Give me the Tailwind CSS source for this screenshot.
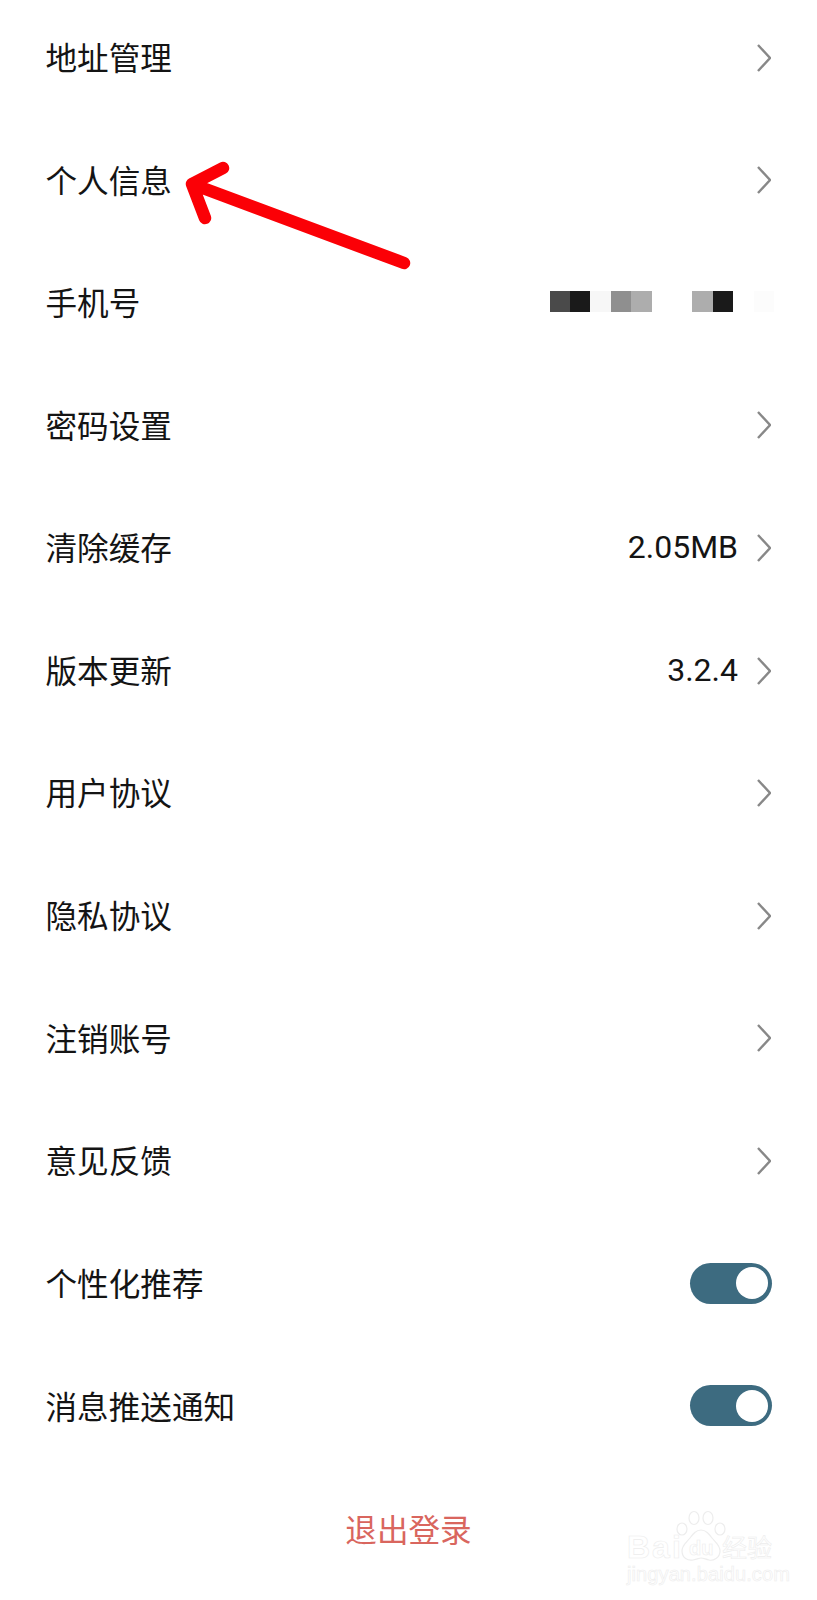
<!doctype html>
<html lang="zh">
<head>
<meta charset="utf-8">
<script src="https://cdn.jsdelivr.net/npm/@tailwindcss/browser@4"></script>
</head>
<body class="bg-white">
<div class="relative w-[817px] h-[1600px] overflow-hidden bg-white text-[#141414] font-['Noto_Sans_CJK_SC','Noto_Sans',sans-serif]">
  <main class="flex flex-col -mt-[4.6px] text-[31.6px] leading-none">
    <div class="h-[122.6px] flex items-center justify-between pl-[45.5px] pr-[46px]"><span>地址管理</span><svg class="w-[14px] h-[28px] mt-[2px]" viewBox="0 0 14 28" fill="none" stroke="#888" stroke-width="2.4"><path d="M1 1l12 13L1 27"/></svg></div>
    <div class="h-[122.6px] flex items-center justify-between pl-[45.5px] pr-[46px]"><span>个人信息</span><svg class="w-[14px] h-[28px] mt-[2px]" viewBox="0 0 14 28" fill="none" stroke="#888" stroke-width="2.4"><path d="M1 1l12 13L1 27"/></svg></div>
    <div class="h-[122.6px] flex items-center justify-between pl-[45.5px] pr-[43px]">
      <span>手机号</span>
      <div class="flex h-[21px]">
        <i class="block w-[20.4px] bg-[#4a4a4a]"></i><i class="block w-[20.4px] bg-[#1a1a1a]"></i><i class="block w-[20.4px] bg-[#f7f7f7]"></i><i class="block w-[20.4px] bg-[#8f8f8f]"></i><i class="block w-[20.4px] bg-[#adadad]"></i><i class="block w-[40.8px]"></i><i class="block w-[20.4px] bg-[#adadad]"></i><i class="block w-[20.4px] bg-[#1a1a1a]"></i><i class="block w-[20.4px]"></i><i class="block w-[20.4px] bg-[#fcfcfc]"></i>
      </div>
    </div>
    <div class="h-[122.6px] flex items-center justify-between pl-[45.5px] pr-[46px]"><span>密码设置</span><svg class="w-[14px] h-[28px] mt-[2px]" viewBox="0 0 14 28" fill="none" stroke="#888" stroke-width="2.4"><path d="M1 1l12 13L1 27"/></svg></div>
    <div class="h-[122.6px] flex items-center justify-between pl-[45.5px] pr-[46px]"><span>清除缓存</span><div class="flex items-center gap-[19px]"><span class="font-['Roboto',sans-serif] text-[32px]">2.05MB</span><svg class="w-[14px] h-[28px] mt-[2px]" viewBox="0 0 14 28" fill="none" stroke="#888" stroke-width="2.4"><path d="M1 1l12 13L1 27"/></svg></div></div>
    <div class="h-[122.6px] flex items-center justify-between pl-[45.5px] pr-[46px]"><span>版本更新</span><div class="flex items-center gap-[19px]"><span class="font-['Roboto',sans-serif] text-[32px]">3.2.4</span><svg class="w-[14px] h-[28px] mt-[2px]" viewBox="0 0 14 28" fill="none" stroke="#888" stroke-width="2.4"><path d="M1 1l12 13L1 27"/></svg></div></div>
    <div class="h-[122.6px] flex items-center justify-between pl-[45.5px] pr-[46px]"><span>用户协议</span><svg class="w-[14px] h-[28px] mt-[2px]" viewBox="0 0 14 28" fill="none" stroke="#888" stroke-width="2.4"><path d="M1 1l12 13L1 27"/></svg></div>
    <div class="h-[122.6px] flex items-center justify-between pl-[45.5px] pr-[46px]"><span>隐私协议</span><svg class="w-[14px] h-[28px] mt-[2px]" viewBox="0 0 14 28" fill="none" stroke="#888" stroke-width="2.4"><path d="M1 1l12 13L1 27"/></svg></div>
    <div class="h-[122.6px] flex items-center justify-between pl-[45.5px] pr-[46px]"><span>注销账号</span><svg class="w-[14px] h-[28px] mt-[2px]" viewBox="0 0 14 28" fill="none" stroke="#888" stroke-width="2.4"><path d="M1 1l12 13L1 27"/></svg></div>
    <div class="h-[122.6px] flex items-center justify-between pl-[45.5px] pr-[46px]"><span>意见反馈</span><svg class="w-[14px] h-[28px] mt-[2px]" viewBox="0 0 14 28" fill="none" stroke="#888" stroke-width="2.4"><path d="M1 1l12 13L1 27"/></svg></div>
    <div class="h-[122.6px] flex items-center justify-between pl-[45.5px] pr-[45px] pt-[1px]"><span>个性化推荐</span><div class="w-[82px] h-[41px] rounded-full bg-[#3d6b80] flex items-center justify-end pr-[4px]"><div class="w-[32px] h-[32px] rounded-full bg-white"></div></div></div>
    <div class="h-[122.6px] flex items-center justify-between pl-[45.5px] pr-[45px] pt-[1px]"><span>消息推送通知</span><div class="w-[82px] h-[41px] rounded-full bg-[#3d6b80] flex items-center justify-end pr-[4px]"><div class="w-[32px] h-[32px] rounded-full bg-white"></div></div></div>
    <div class="h-[122.6px] flex items-center justify-center text-[#d9665e] pt-[1px]">退出登录</div>
  </main>

  <svg class="absolute left-0 top-0 pointer-events-none" width="817" height="300" viewBox="0 0 817 300" fill="none" stroke="#fb0006" stroke-width="12.5" stroke-linecap="round" stroke-linejoin="round"><path d="M404 263L192 184M223 168L192 184L205 218"/></svg>

  <div class="absolute left-[627px] top-[1510px] w-[150px] h-[76px] text-white [-webkit-text-stroke:0.6px_#ededed] pointer-events-none">
    <svg class="absolute left-[46px] top-0" width="56" height="54" viewBox="0 0 56 54" fill="none" stroke="#ededed" stroke-width="1.2">
      <ellipse cx="9" cy="19" rx="5" ry="6"/><ellipse cx="21" cy="8" rx="5" ry="6.5"/><ellipse cx="35" cy="8" rx="5" ry="6.5"/><ellipse cx="47" cy="19" rx="5" ry="6"/>
      <path d="M28 20c-5 0-8 4-11 8s-8 7-8 13c0 7 6 10 11 9s6-2 8-2 4 1 8 2 11-2 11-9c0-6-5-9-8-13s-6-8-11-8z"/>
    </svg>
    <span class="absolute left-0 top-[22px] text-[32px] leading-[30px] font-['Liberation_Sans',sans-serif] font-bold tracking-[2px]">Bai</span>
    <span class="absolute left-[62px] top-[29px] text-[20px] leading-[19px] font-['Liberation_Sans',sans-serif] font-bold">du</span>
    <span class="absolute left-[95px] top-[23px] text-[25px] leading-[26px] font-['Noto_Sans_CJK_SC',sans-serif]">经验</span>
    <span class="absolute left-0 top-[53px] text-[20px] leading-[22px] font-['Liberation_Sans',sans-serif] tracking-[0.1px] whitespace-nowrap">jingyan.baidu.com</span>
  </div>
</div>
</body>
</html>
